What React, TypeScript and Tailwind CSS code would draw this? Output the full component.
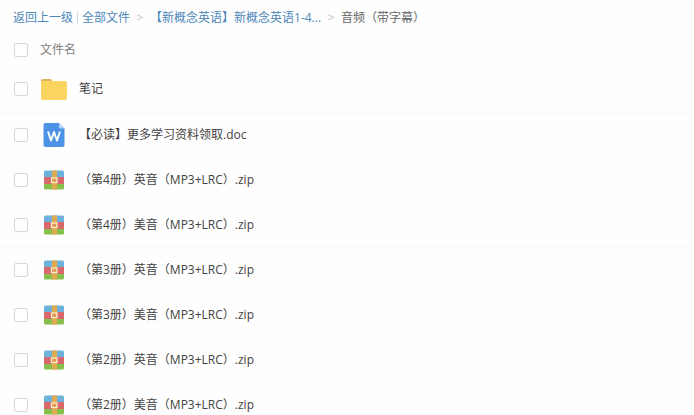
import { useState } from "react";

type FileKind = "folder" | "doc" | "zip";

interface FileItem {
  name: string;
  kind: FileKind;
}

const files: FileItem[] = [
  { name: "笔记", kind: "folder" },
  { name: "【必读】更多学习资料领取.doc", kind: "doc" },
  { name: "（第4册）英音（MP3+LRC）.zip", kind: "zip" },
  { name: "（第4册）美音（MP3+LRC）.zip", kind: "zip" },
  { name: "（第3册）英音（MP3+LRC）.zip", kind: "zip" },
  { name: "（第3册）美音（MP3+LRC）.zip", kind: "zip" },
  { name: "（第2册）英音（MP3+LRC）.zip", kind: "zip" },
  { name: "（第2册）美音（MP3+LRC）.zip", kind: "zip" },
];

function FolderIcon() {
  return (
    <svg className="w-[26px] h-[22px]" viewBox="0 0 26 22" aria-hidden="true">
      <path d="M0 3a2 2 0 0 1 2-2h8l2 2.500V9H0z" fill="#dfb75a" />
      <rect y="3" width="26" height="19" rx="2" fill="#fad45f" />
    </svg>
  );
}

function DocIcon() {
  return (
    <svg className="w-[22px] h-6" viewBox="0 0 22 24" aria-hidden="true">
      <path d="M2.500 0H16l5.500 5.500V22a2 2 0 0 1-2 2h-17a2 2 0 0 1-2-2V2a2 2 0 0 1 2-2z" fill="#4c93e6" />
      <path d="M16 0l5.500 5.500H17.500A1.500 1.500 0 0 1 16 4z" fill="#b5d5f8" />
      <path d="M5 8.500l3 9 3-8.500 3 8.500 3-9" fill="none" stroke="#fff" strokeWidth="1.900" strokeLinejoin="round" />
    </svg>
  );
}

function ZipIcon() {
  return (
    <svg className="w-5 h-5" viewBox="0 0 20 20" aria-hidden="true">
      <path d="M0 7V2a1.500 1.500 0 0 1 1.500-1.500h17A1.500 1.500 0 0 1 20 2v5z" fill="#6cb2dc" />
      <path d="M0 7h20v7H0z" fill="#d8686c" />
      <path d="M0 14h20v4a1.500 1.500 0 0 1-1.500 1.500h-17A1.500 1.500 0 0 1 0 18z" fill="#86c04a" />
      <path d="M8 0.500h5v19H8z" fill="#e0ab50" />
      <rect x="7.500" y="8" width="5.500" height="4.500" fill="#e0985a" stroke="#fdeec4" strokeWidth="1.300" />
    </svg>
  );
}

const icons = { folder: FolderIcon, doc: DocIcon, zip: ZipIcon };

const checkboxClass =
  "appearance-none block shrink-0 w-3.5 h-3.5 rounded-xs border border-[#d8d8d8] bg-white checked:bg-[#4a90e2] checked:border-[#4a90e2]";

function Breadcrumb() {
  return (
    <nav className="flex items-center h-9 px-[13px] whitespace-nowrap text-[#4d88b8]">
      <a href="#back">返回上一级</a>
      <span className="w-px h-3 mx-1 bg-[#c8dcec]" />
      <a href="#all">全部文件</a>
      <span className="w-5 text-center text-[#c4c4c4]">&gt;</span>
      <a href="#course">【新概念英语】新概念英语1-4...</a>
      <span className="w-5 text-center text-[#c4c4c4]">&gt;</span>
      <span className="text-[#666]">音频（带字幕）</span>
    </nav>
  );
}

export default function App() {
  const [selected, setSelected] = useState<string[]>([]);
  const allSelected = selected.length === files.length;

  const toggle = (name: string) =>
    setSelected((prev) => (prev.includes(name) ? prev.filter((n) => n !== name) : [...prev, name]));

  return (
    <main className="bg-[#fefefe] font-['Open_Sans','Noto_Sans_CJK_SC',sans-serif] text-xs text-[#424242]">
      <Breadcrumb />
      <table className="w-full border-collapse">
        <thead>
          <tr className="h-[31px] text-left text-[#808080]">
            <th className="w-10 pl-3.5 pt-0 pb-1 font-normal">
              <input
                type="checkbox"
                aria-label="全选"
                className={checkboxClass}
                checked={allSelected}
                onChange={() => setSelected(allSelected ? [] : files.map((f) => f.name))}
              />
            </th>
            <th className="pb-1 font-normal">文件名</th>
          </tr>
        </thead>
        <tbody>
          {files.map((file, i) => {
            const Icon = icons[file.kind];
            return (
              <tr key={file.name} className="h-[45px] border-b border-[#f9f9f9] hover:bg-[#f4fbff]">
                <td className="w-10 pl-3.5">
                  <input
                    id={`file-${i}`}
                    type="checkbox"
                    className={checkboxClass}
                    checked={selected.includes(file.name)}
                    onChange={() => toggle(file.name)}
                  />
                </td>
                <td>
                  <label htmlFor={`file-${i}`} className="flex items-center whitespace-nowrap">
                    <span className="flex justify-center w-7 mr-[11px] shrink-0">
                      <Icon />
                    </span>
                    {file.name}
                  </label>
                </td>
              </tr>
            );
          })}
        </tbody>
      </table>
    </main>
  );
}
